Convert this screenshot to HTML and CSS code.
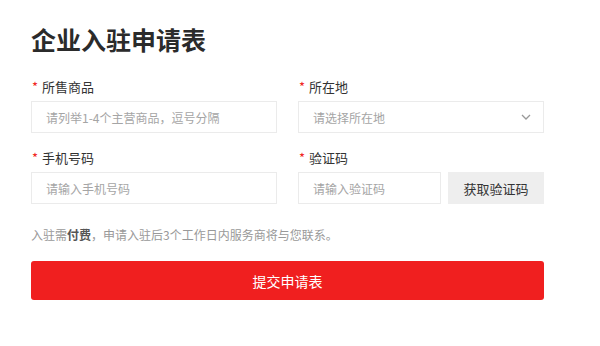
FILE: index.html
```html
<!DOCTYPE html>
<html lang="zh-CN">
<head>
    <meta charset="UTF-8">
    <meta name="viewport" content="width=device-width, initial-scale=1.0">
    <title>企业入驻申请表</title>
    <link rel="stylesheet" href="styles.css">
</head>
<body>
    <div class="apply">
        <h1>企业入驻申请表</h1>

        <div class="grid">
            <div class="field">
                <label class="label"><span class="req">*</span>所售商品</label>
                <input type="text" class="input" placeholder="请列举1-4个主营商品，逗号分隔">
            </div>
            <div class="field">
                <label class="label"><span class="req">*</span>所在地</label>
                <div class="select">
                    <span class="select-text">请选择所在地</span>
                    <svg class="chevron" width="10" height="6" viewBox="0 0 10 6"><path d="M1 1l4 4 4-4" fill="none" stroke="#999" stroke-width="1.3"/></svg>
                </div>
            </div>
            <div class="field">
                <label class="label"><span class="req">*</span>手机号码</label>
                <input type="text" class="input" placeholder="请输入手机号码">
            </div>
            <div class="field">
                <label class="label"><span class="req">*</span>验证码</label>
                <div class="code-row">
                    <input type="text" class="input" placeholder="请输入验证码">
                    <button class="code-btn">获取验证码</button>
                </div>
            </div>
        </div>

        <p class="note">入驻需<b>付费</b>，申请入驻后3个工作日内服务商将与您联系。</p>

        <button class="submit">提交申请表</button>
    </div>
</body>
</html>
```

FILE: styles.css
```css
body {
    margin: 0;
    background: #fff;
    font-family: "Noto Sans CJK SC", "Noto Sans", sans-serif;
    color: #333;
}
.apply {
    width: 513px;
    padding: 21px 31px;
}
h1 {
    margin: 0;
    font-size: 25px;
    line-height: 36px;
    font-weight: 700;
    color: #2b2b2b;
}
.grid {
    display: grid;
    grid-template-columns: 1fr 1fr;
    column-gap: 21px;
    row-gap: 15px;
    margin-top: 20px;
}
.field {
    display: flex;
    flex-direction: column;
}
.label {
    font-size: 13px;
    line-height: 20px;
    margin-bottom: 4px;
    color: #333;
}
.req {
    color: #f01f1f;
    margin: 0 4px 0 1px;
}
.input {
    box-sizing: border-box;
    height: 32px;
    border: 1px solid #ebebeb;
    padding: 0 14px;
    font-family: inherit;
    font-size: 12px;
    color: #333;
    outline: none;
    width: 100%;
    min-width: 0;
}
.input::placeholder {
    color: #a5a5a5;
}
.select {
    box-sizing: border-box;
    height: 32px;
    border: 1px solid #ebebeb;
    padding: 0 12px 0 14px;
    display: flex;
    align-items: center;
    justify-content: space-between;
}
.select-text {
    font-size: 12px;
    color: #a5a5a5;
}
.code-row {
    display: flex;
    gap: 7px;
}
.code-btn {
    flex: 0 0 96px;
    height: 32px;
    border: none;
    background: #eeeeee;
    font-family: inherit;
    font-size: 13px;
    color: #333;
    cursor: pointer;
}
.note {
    margin: 21px 0 16px;
    font-size: 12px;
    line-height: 20px;
    color: #999;
}
.note b {
    color: #555;
}
.submit {
    display: block;
    width: 100%;
    height: 39px;
    border: none;
    border-radius: 3px;
    background: #f01f1f;
    color: #fff;
    font-family: inherit;
    font-size: 14px;
    cursor: pointer;
}
```
